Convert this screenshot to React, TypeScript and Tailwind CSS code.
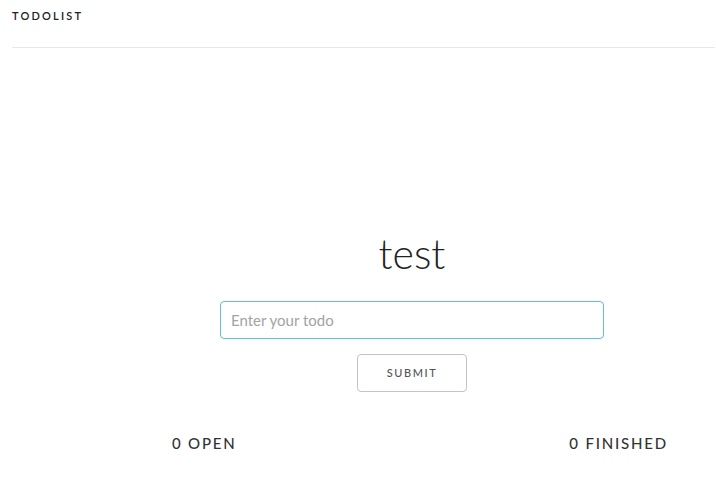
import React from 'react';

export default function App() {
  const [todo, setTodo] = React.useState('');

  return (
    <div className="min-h-screen bg-white text-[#333] font-['Lato','Noto_Sans',sans-serif]">
      <header className="ml-3 mr-px h-[48px] border-b border-[#e8e8e8] pt-[10px]">
        <div className="text-[11px] font-semibold tracking-[2.2px] leading-none text-[#222]">TODOLIST</div>
      </header>

      <main className="pt-[185px]">
        <div className="ml-[220px] w-[384px] flex flex-col items-center">
          <h1 className="text-[41px] font-light leading-none text-[#222]">test</h1>
          <input
            autoFocus
            value={todo}
            onChange={(e) => setTodo(e.target.value)}
            placeholder="Enter your todo"
            className="mt-[27px] h-[38px] w-full rounded-[4px] border border-[#66bcd8] px-[10px] text-[15px] text-[#333] outline-none placeholder:text-[#a3a3a3]"
          />
          <button className="mt-[15px] h-[38px] w-[110px] rounded-[4px] border border-[#c4c4c4] text-[11px] font-medium tracking-[1.6px] text-[#555]">
            SUBMIT
          </button>
        </div>

        <div className="ml-[172px] mt-[44px] flex w-[496px] justify-between text-[15px] font-medium tracking-[1.8px] leading-none text-[#333]">
          <span>0 OPEN</span>
          <span>0 FINISHED</span>
        </div>
      </main>
    </div>
  );
}
